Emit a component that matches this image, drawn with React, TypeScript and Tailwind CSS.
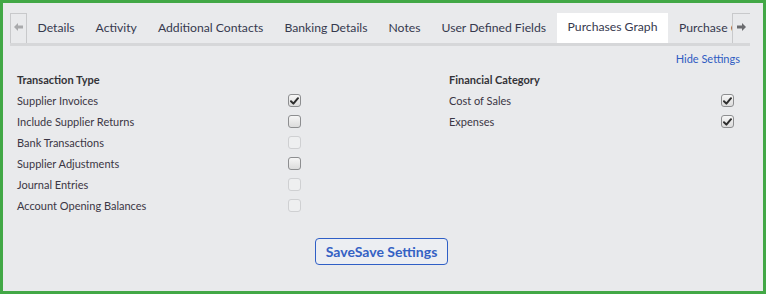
import React from 'react';

const tabs = [
  'Details',
  'Activity',
  'Additional Contacts',
  'Banking Details',
  'Notes',
  'User Defined Fields',
  'Purchases Graph',
  'Purchase Orders',
];

type Box = 'checked' | 'empty' | 'disabled';

const transactionTypes: { label: string; state: Box }[] = [
  { label: 'Supplier Invoices', state: 'checked' },
  { label: 'Include Supplier Returns', state: 'empty' },
  { label: 'Bank Transactions', state: 'disabled' },
  { label: 'Supplier Adjustments', state: 'empty' },
  { label: 'Journal Entries', state: 'disabled' },
  { label: 'Account Opening Balances', state: 'disabled' },
];

const financialCategories: { label: string; state: Box }[] = [
  { label: 'Cost of Sales', state: 'checked' },
  { label: 'Expenses', state: 'checked' },
];

function CheckBox({ state }: { state: Box }) {
  if (state === 'disabled') {
    return <div className="w-[13px] h-[13px] -mt-[2px] rounded-[3px] border border-[#cfd0d2] bg-[#eeeff0]" />;
  }
  return (
    <div className="w-[13px] h-[13px] -mt-[2px] rounded-[3px] border border-[#8d8e90] bg-gradient-to-b from-[#f6f6f6] to-[#dcdcdc] flex items-center justify-center">
      {state === 'checked' && (
        <svg width="9" height="8" viewBox="0 0 9 8">
          <path d="M1 4.3 L3.4 6.6 L8 1.2" fill="none" stroke="#2e2e2e" strokeWidth="2" strokeLinecap="round" strokeLinejoin="round" />
        </svg>
      )}
    </div>
  );
}

function OptionList({ title, items }: { title: string; items: { label: string; state: Box }[] }) {
  return (
    <div className="flex flex-col">
      <div className="h-[21px] flex items-center text-[11px] font-bold text-[#333338]">{title}</div>
      {items.map((item) => (
        <div key={item.label} className="h-[21px] flex items-center justify-between text-[11px] text-[#3b3644]">
          <span className="-mt-[1px]">{item.label}</span>
          <CheckBox state={item.state} />
        </div>
      ))}
    </div>
  );
}

export default function App() {
  return (
    <div
      className="w-[766px] h-[294px] border-[3px] border-[#42a846] bg-[#e9eaec] overflow-hidden"
      style={{ fontFamily: 'Lato, "Open Sans", sans-serif' }}
    >
      {/* Tab strip */}
      <div className="mt-[10px] ml-[7px] w-[740px] flex border-b-[3px] border-[#d6d7d9]">
        <div className="w-[17px] h-[30px] shrink-0 border-l border-t border-r border-[#c8c9cb] flex justify-center pt-[9px]">
          <svg width="9" height="8" viewBox="0 0 9 8">
            <path d="M0 4 L4 0 L4 2.5 L9 2.5 L9 5.5 L4 5.5 L4 8 Z" fill="#a9aaac" />
          </svg>
        </div>
        <div className="flex-1 flex overflow-hidden">
          {tabs.map((tab) => {
            const active = tab === 'Purchases Graph';
            return (
              <div
                key={tab}
                className={
                  active
                    ? 'h-[33px] -mb-[3px] px-[11px] pt-[1px] shrink-0 flex items-center whitespace-nowrap text-[12.2px] text-[#36394e] bg-white border-b-[3px] border-[#2a5bc4]'
                    : 'h-[30px] px-[10.5px] shrink-0 flex items-center whitespace-nowrap text-[12.2px] text-[#36394e]'
                }
              >
                <span className={active ? '-mt-[2px]' : 'mt-[1px]'}>{tab}</span>
              </div>
            );
          })}
        </div>
        <div className="w-[18px] h-[30px] shrink-0 border-l border-t border-[#c8c9cb] bg-[#e9eaec] flex justify-center pt-[9px]">
          <svg width="9" height="8" viewBox="0 0 9 8">
            <path d="M9 4 L5 0 L5 2.5 L0 2.5 L0 5.5 L5 5.5 L5 8 Z" fill="#6a6b6e" />
          </svg>
        </div>
      </div>

      {/* Settings link */}
      <div className="h-[24px] pr-[23px] pt-[5px] flex justify-end">
        <span className="text-[11px] leading-[16px] text-[#2f5cc2]">Hide Settings</span>
      </div>

      {/* Option columns */}
      <div className="pl-[14px] flex gap-[148px]">
        <div className="w-[284px]">
          <OptionList title="Transaction Type" items={transactionTypes} />
        </div>
        <div className="w-[285px]">
          <OptionList title="Financial Category" items={financialCategories} />
        </div>
      </div>

      {/* Save */}
      <div className="mt-[21px] flex justify-center pr-[3px]">
        <button className="w-[133px] h-[27px] rounded-[4px] border border-[#2f5fc6] bg-[#eceef2] text-[14px] font-bold text-[#3461c4]">
          SaveSave Settings
        </button>
      </div>
    </div>
  );
}
